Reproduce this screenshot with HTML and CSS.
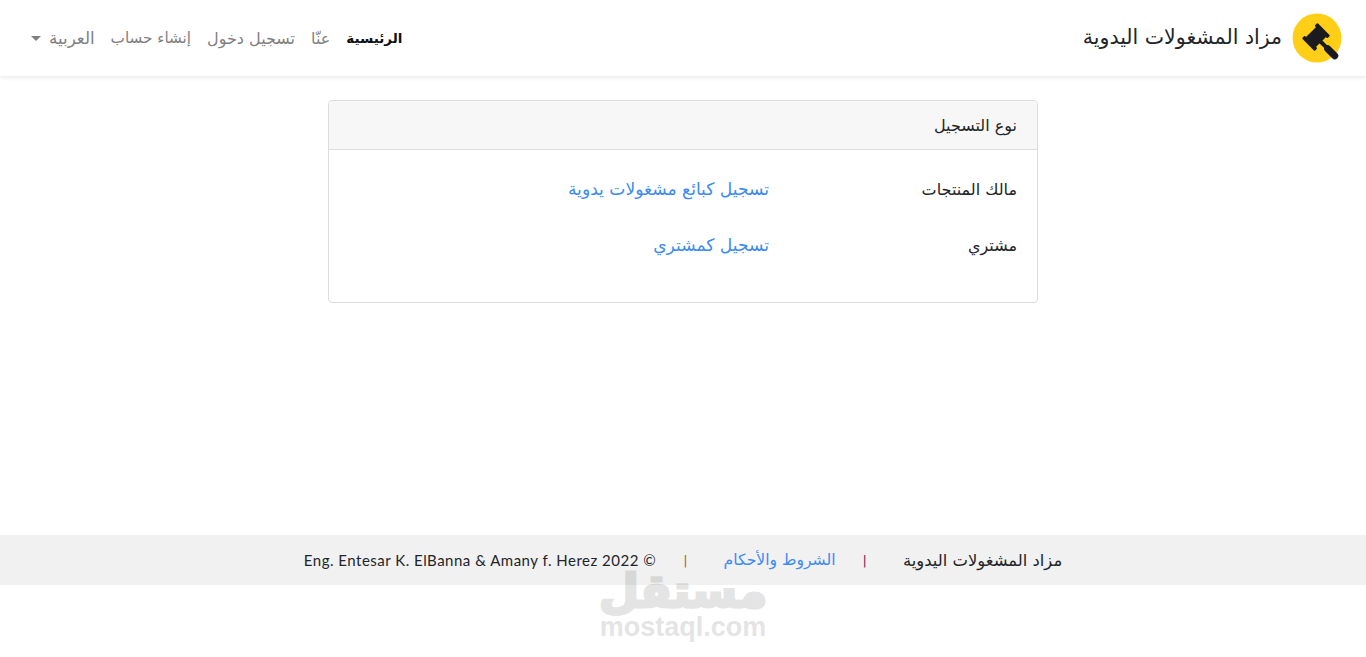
FILE: index.html
```html
<!DOCTYPE html>
<html lang="ar" dir="rtl">
<head>
<meta charset="utf-8">
<title>مزاد المشغولات اليدوية</title>
<link rel="stylesheet" href="styles.css">
</head>
<body>
<header class="navbar">
  <a class="brand" href="#">
    <svg class="logo" width="50" height="50" viewBox="0 0 50 50" aria-hidden="true">
      <circle cx="25" cy="25" r="24.5" fill="#ffcf18"/>
      <g fill="#1b1b1f" transform="translate(24 24) rotate(-45)">
        <rect x="-7.5" y="-7" width="15" height="14"/>
        <rect x="-11" y="-9" width="4" height="18" rx="1"/>
        <rect x="7" y="-9" width="4" height="18" rx="1"/>
        <rect x="-2" y="6" width="4" height="8"/>
        <rect x="-3.5" y="13" width="7" height="17" rx="3.5"/>
      </g>
    </svg>
    <span class="brand-name">مزاد المشغولات اليدوية</span>
  </a>
  <nav class="nav">
    <a class="nav-link active" href="#">الرئيسية</a>
    <a class="nav-link" href="#">عنّا</a>
    <a class="nav-link" href="#">تسجيل دخول</a>
    <a class="nav-link nav-signup" href="#">إنشاء حساب</a>
    <a class="nav-link nav-lang" href="#">العربية<span class="caret"></span></a>
  </nav>
</header>
<main class="content">
  <section class="card">
    <div class="card-header">نوع التسجيل</div>
    <div class="card-body">
      <div class="row">
        <div class="label">مالك المنتجات</div>
        <a class="link card-link" href="#">تسجيل كبائع مشغولات يدوية</a>
      </div>
      <div class="row">
        <div class="label">مشتري</div>
        <a class="link card-link" href="#">تسجيل كمشتري</a>
      </div>
    </div>
  </section>
</main>
<footer class="footer">
  <span class="foot-name">مزاد المشغولات اليدوية</span>
  <span class="sep">|</span>
  <a class="link foot-link" href="#">الشروط والأحكام</a>
  <span class="sep alt">|</span>
  <span class="copy" dir="ltr">Eng. Entesar K. ElBanna &amp; Amany f. Herez 2022 ©</span>
</footer>
<div class="watermark" aria-hidden="true">
  <div class="wm-ar">مستقل</div>
  <div class="wm-en">mostaql.com</div>
</div>
</body>
</html>
```
FILE: styles.css
```css
* { box-sizing: border-box; }
html, body { margin: 0; height: 100%; }
body {
  font-family: "DejaVu Sans", sans-serif;
  font-size: 16px;
  color: #212529;
  background: #fff;
  position: relative;
  overflow: hidden;
}
a { text-decoration: none; }
.navbar {
  height: 76px;
  display: flex;
  align-items: center;
  justify-content: space-between;
  padding: 0 24px;
  background: #fff;
  box-shadow: 0 2px 4px rgba(0,0,0,.08);
}
.brand { display: flex; align-items: center; gap: 10px; color: #212529; }
.logo { display: block; }
.brand-name { font-size: 20.5px; margin-bottom: 3px; }
.nav { display: flex; align-items: center; padding-left: 7px; gap: 16px; }
.nav-link { color: #7f7f7f; font-size: 16px; }
.nav-signup { font-size: 15.2px; }
.nav-lang { font-size: 16.7px; }
.nav-link.active { color: #111; font-weight: 700; font-size: 13.5px; }
.caret {
  display: inline-block;
  margin-right: 8px;
  vertical-align: 3px;
  border-top: 5px solid #7f7f7f;
  border-left: 5px solid transparent;
  border-right: 5px solid transparent;
}
.content { padding-top: 24px; height: 459px; }
.card {
  width: 710px;
  height: 203px;
  margin: 0 auto;
  border: 1px solid #dcdcdc;
  border-radius: 4px;
}
.card-header {
  height: 49px;
  padding: 0 20px;
  display: flex;
  align-items: center;
  background: #f7f7f7;
  border-bottom: 1px solid #dcdcdc;
  border-radius: 3px 3px 0 0;
}
.card-body { padding: 11px 20px 13px; }
.row { display: flex; align-items: center; height: 56px; }
.label { width: 248px; }
.link { color: #3d8bf2; }
.card-link { font-size: 17.1px; }
.footer {
  height: 50px;
  background: #f1f1f1;
  display: flex;
  align-items: center;
  justify-content: center;
  gap: 27px;
}
.foot-name { font-size: 16.4px; }
.foot-link { font-size: 15.6px; }
.sep { color: #6b1e5a; font-size: 13px; margin-inline-start: 9px; }
.sep.alt { color: #a8641e; }
.copy { font-size: 15px; letter-spacing: .5px; font-family: "Lato", sans-serif; }
.watermark {
  position: absolute;
  left: 583px;
  top: 570px;
  width: 200px;
  text-align: center;
  color: #000;
  opacity: .1;
  font-weight: 700;
  font-family: "Liberation Sans", sans-serif;
}
.wm-ar { font-size: 46px; line-height: 42px; font-family: "DejaVu Sans", sans-serif; -webkit-text-stroke: 3px #000; }
.wm-en { font-size: 27px; line-height: 30px; }
```
